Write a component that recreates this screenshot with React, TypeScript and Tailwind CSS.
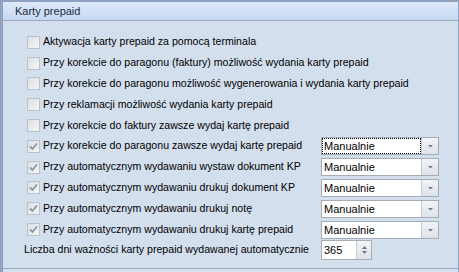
import React from 'react';

type Row = { label: string; checked: boolean; combo?: boolean };

const rows: Row[] = [
  { label: 'Aktywacja karty prepaid za pomocą terminala', checked: false },
  { label: 'Przy korekcie do paragonu (faktury) możliwość wydania karty prepaid', checked: false },
  { label: 'Przy korekcie do paragonu możliwość wygenerowania i wydania karty prepaid', checked: false },
  { label: 'Przy reklamacji możliwość wydania karty prepaid', checked: false },
  { label: 'Przy korekcie do faktury zawsze wydaj kartę prepaid', checked: false },
  { label: 'Przy korekcie do paragonu zawsze wydaj kartę prepaid', checked: true, combo: true },
  { label: 'Przy automatycznym wydawaniu wystaw dokument KP', checked: true, combo: true },
  { label: 'Przy automatycznym wydawaniu drukuj dokument KP', checked: true, combo: true },
  { label: 'Przy automatycznym wydawaniu drukuj notę', checked: true, combo: true },
  { label: 'Przy automatycznym wydawaniu drukuj kartę prepaid', checked: true, combo: true },
];

function CheckBox({ checked }: { checked: boolean }) {
  return (
    <div className="w-[13px] h-[13px] border border-[#b9c2cc] bg-gradient-to-br from-[#dcdfe3] to-[#f4f5f6] flex items-center justify-center shrink-0">
      {checked && (
        <svg width="9" height="9" viewBox="0 0 9 9">
          <path d="M1 4.5 L3.5 7 L8 1.5" fill="none" stroke="#8c97a6" strokeWidth="1.8" />
        </svg>
      )}
    </div>
  );
}

function Arrow() {
  return (
    <svg width="7" height="4" viewBox="0 0 7 4">
      <path d="M1 1 L3.5 3.5 L6 1 Z" fill="#6f7a88" />
    </svg>
  );
}

function Combo({ focused }: { focused?: boolean }) {
  return (
    <div className="flex w-[118px] h-[18px] border border-[#a5acb5] bg-white">
      <div className="flex-1 flex items-center px-[1px]">
        <span
          className={`pl-[1px] pr-[2px] leading-[14px] text-[11px] text-black ${
            focused ? 'outline outline-1 outline-dotted outline-black w-full' : ''
          }`}
        >
          Manualnie
        </span>
      </div>
      <div className="w-[17px] border-l border-[#c3cad4] bg-gradient-to-b from-[#f2f4f7] to-[#dde3ea] flex items-center justify-center">
        <Arrow />
      </div>
    </div>
  );
}

export default function App() {
  return (
    <div
      className="w-[459px] h-[272px] bg-[#d4dfee] border-t-2 border-l-[3px] border-r border-[#8fa3bf] flex flex-col text-[10.6px] text-black"
      style={{ fontFamily: '"Liberation Sans", Arial, sans-serif' }}
    >
      {/* nagłówek */}
      <div className="h-[19px] shrink-0 bg-gradient-to-b from-[#dfeafa] to-[#c5d8f2] border-b border-[#9aaac0] flex items-center pl-[12px] text-[11px] text-[#1c2a3e]">
        Karty prepaid
      </div>

      {/* lista opcji */}
      <div className="flex-1 flex flex-col pl-[24px] pt-[11px]">
        {rows.map((r, i) => (
          <div key={i} className="h-[20.8px] flex items-center">
            <div className="w-[294px] flex items-center gap-[3px]">
              <CheckBox checked={r.checked} />
              <span className="whitespace-nowrap">{r.label}</span>
            </div>
            {r.combo && <Combo focused={i === 5} />}
          </div>
        ))}
        <div className="h-[20.8px] flex items-center">
          <div className="w-[297px] -ml-[3px] whitespace-nowrap">
            Liczba dni ważności karty prepaid wydawanej automatycznie
          </div>
          <div className="flex w-[51px] h-[20px] border border-[#a5acb5] bg-white">
            <div className="flex-1 flex items-center pl-[2px] text-[11px]">365</div>
            <div className="w-[15px] border-l border-[#c3cad4] bg-gradient-to-b from-[#f2f4f7] to-[#dde3ea] flex flex-col items-center justify-center gap-[2px]">
              <svg width="5" height="3" viewBox="0 0 5 3">
                <path d="M0 3 L2.5 0 L5 3 Z" fill="#6f7a88" />
              </svg>
              <svg width="5" height="3" viewBox="0 0 5 3">
                <path d="M0 0 L2.5 3 L5 0 Z" fill="#6f7a88" />
              </svg>
            </div>
          </div>
        </div>
      </div>
      <div className="h-[4px] shrink-0 border-t border-[#9aaac0] bg-[#d4dfee]" />
    </div>
  );
}
